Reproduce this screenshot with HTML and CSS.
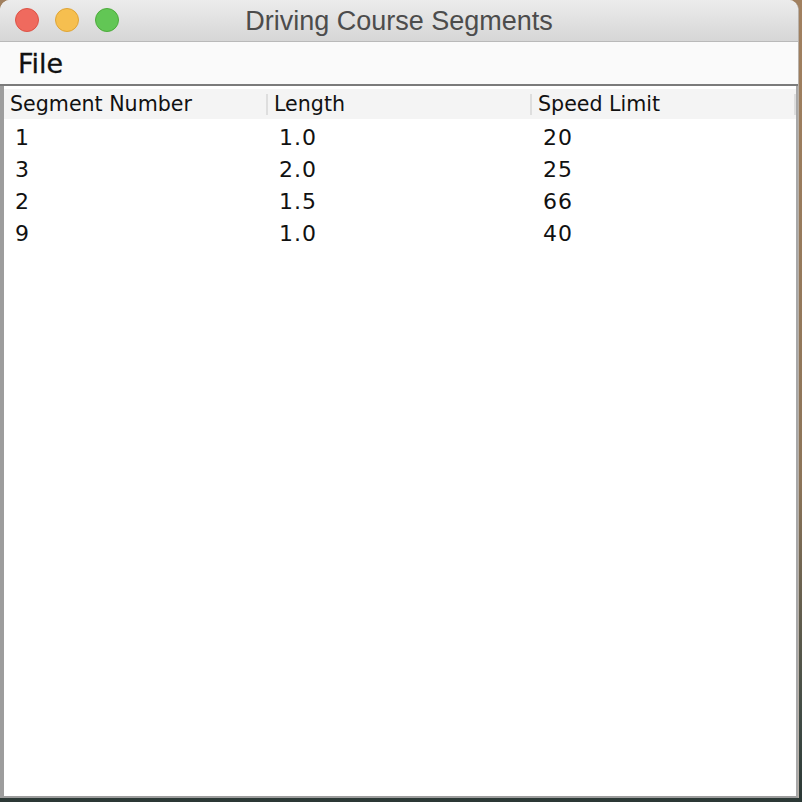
FILE: index.html
```html
<!DOCTYPE html>
<html>
<head>
<meta charset="utf-8">
<link rel="stylesheet" href="styles.css">
</head>
<body>
<div class="window">
  <div class="titlebar">
    <div class="lights">
      <span class="light red"></span>
      <span class="light yellow"></span>
      <span class="light green"></span>
    </div>
    <div class="title">Driving Course Segments</div>
  </div>
  <div class="menubar"><span class="menu">File</span></div>
  <div class="content">
    <table class="grid">
      <thead>
        <tr><th>Segment Number</th><th>Length</th><th>Speed Limit</th></tr>
      </thead>
      <tbody>
        <tr><td>1</td><td>1.0</td><td>20</td></tr>
        <tr><td>3</td><td>2.0</td><td>25</td></tr>
        <tr><td>2</td><td>1.5</td><td>66</td></tr>
        <tr><td>9</td><td>1.0</td><td>40</td></tr>
      </tbody>
    </table>
  </div>
</div>
</body>
</html>
```

FILE: styles.css
```css
html, body {
  margin: 0;
  padding: 0;
}
body {
  width: 802px;
  height: 802px;
  overflow: hidden;
  background: linear-gradient(to bottom, #a1805f 0%, #8c7458 60%, #3f4a44 90%, #2b3835 100%);
}
.window {
  width: 799px;
  height: 798px;
  border-radius: 10px 10px 0 0;
  overflow: hidden;
  display: flex;
  flex-direction: column;
  background: #fff;
  border-right: 1px solid #b8b0a8;
  box-sizing: border-box;
}
.titlebar {
  position: relative;
  height: 41px;
  flex: none;
  background: linear-gradient(to bottom, #ececec, #d6d6d6);
  border-bottom: 1px solid #b9b9b9;
  display: flex;
  align-items: center;
  justify-content: center;
}
.lights {
  position: absolute;
  left: 15px;
  top: 8px;
  display: flex;
  gap: 16px;
}
.light {
  width: 24px;
  height: 24px;
  border-radius: 50%;
  box-sizing: border-box;
}
.red { background: #ef6a5e; border: 1px solid #dc5346; }
.yellow { background: #f6bf4f; border: 1px solid #dea436; }
.green { background: #62c655; border: 1px solid #4dab3c; }
.title {
  font-family: "Liberation Sans", Arial, sans-serif;
  font-size: 27px;
  color: #4c4c4c;
  margin-top: 1px;
}
.menubar {
  height: 44px;
  flex: none;
  background: #fafafa;
  border-bottom: 2px solid #7b7b7b;
  box-sizing: border-box;
  display: flex;
  align-items: center;
  padding-left: 18px;
}
.menu {
  font-family: "DejaVu Sans", sans-serif;
  font-size: 27px;
  color: #111;
  margin-top: 1px;
  -webkit-text-stroke: 0.3px #111;
}
.content {
  flex: 1;
  border-left: 4px solid #9d9d9d;
  border-bottom: 2px solid #9d9d9d;
  border-right: 2px solid #a8a8a8;
  padding-top: 3px;
  background: #fff;
}
.grid {
  border-collapse: collapse;
  width: 791px;
  table-layout: fixed;
  font-family: "DejaVu Sans", sans-serif;
  color: #111;
}
.grid th {
  background: #f4f4f4;
  height: 30px;
  padding: 0 0 0 6px;
  font-weight: normal;
  font-size: 20.6px;
  text-align: left;
  position: relative;
  width: 264px;
  box-sizing: border-box;
}
.grid th::after {
  content: "";
  position: absolute;
  right: 0;
  top: 5px;
  bottom: 4px;
  width: 2px;
  background: #dedede;
}
.grid td {
  height: 32px;
  padding: 0 0 0 11px;
  font-size: 22px;
  letter-spacing: 1px;
}
.grid tbody tr:first-child td {
  padding-top: 2px;
}
```
